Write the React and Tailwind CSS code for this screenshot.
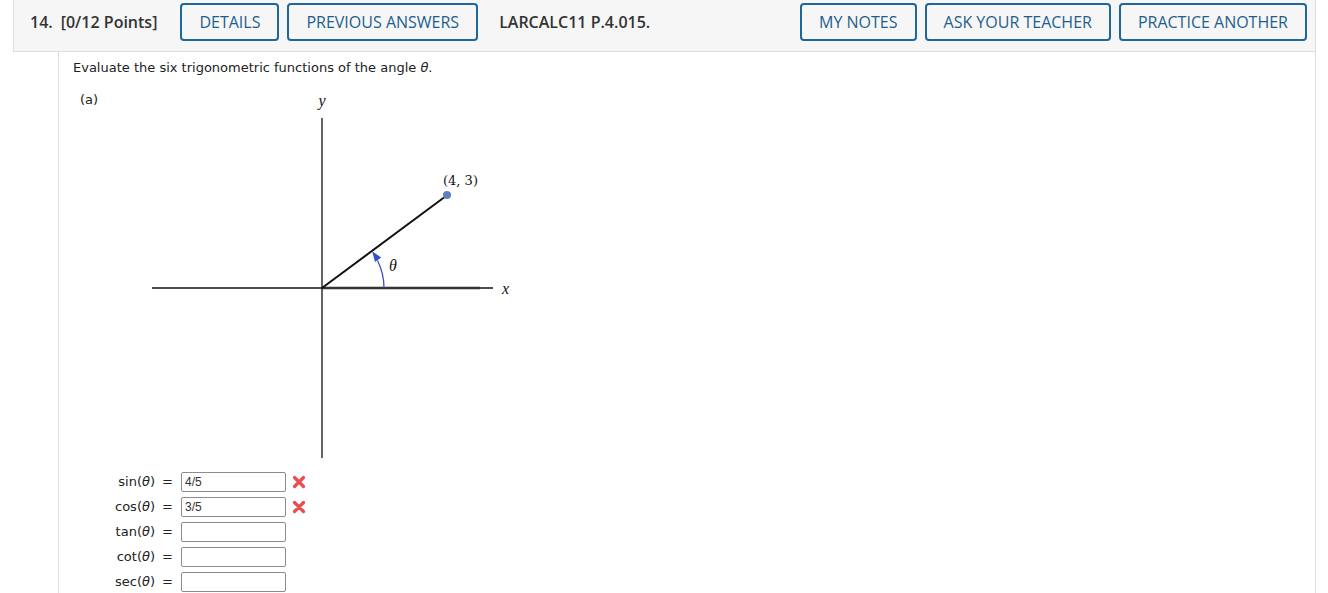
import React from 'react';

const rows = [
  { fn: 'sin', value: '4/5', wrong: true },
  { fn: 'cos', value: '3/5', wrong: true },
  { fn: 'tan', value: '' },
  { fn: 'cot', value: '' },
  { fn: 'sec', value: '' },
];

function HeaderButton({ children }) {
  return (
    <button className="h-[38px] px-[17px] border-2 border-[#1f669c] rounded-[4px] text-[16px] font-medium text-[#1d5e8f] bg-transparent leading-none whitespace-nowrap">
      {children}
    </button>
  );
}

function WrongMark() {
  return (
    <svg width="14" height="14" viewBox="0 0 14 14" className="ml-[6px]">
      <path d="M2.5 2.5 L11.5 11.5 M11.5 2.5 L2.5 11.5" stroke="#ec4b4f" strokeWidth="3.2" strokeLinecap="round" />
    </svg>
  );
}

function Figure() {
  return (
    <svg width="380" height="372" viewBox="0 0 380 372" className="block">
      <text x="182" y="16" textAnchor="middle" fontFamily="'Liberation Serif', serif" fontStyle="italic" fontSize="16" fill="#111">y</text>
      <line x1="182" y1="28" x2="182" y2="368" stroke="#111" strokeWidth="1.3" />
      <line x1="12" y1="198" x2="353" y2="198" stroke="#111" strokeWidth="1.3" />
      <line x1="182" y1="198" x2="340" y2="198" stroke="#333" strokeWidth="2.6" />
      <line x1="182" y1="198" x2="306" y2="106" stroke="#111" strokeWidth="2" />
      <circle cx="307" cy="105" r="4" fill="#5a80bd" />
      <text x="303" y="95" fontFamily="'DejaVu Serif', serif" fontSize="13" fill="#111">(4, 3)</text>
      <text x="362" y="204" fontFamily="'Liberation Serif', serif" fontStyle="italic" fontSize="16" fill="#111">x</text>
      <text x="249" y="181" fontFamily="'Liberation Serif', serif" fontStyle="italic" fontSize="16" fill="#111">θ</text>
      <path d="M244 198 A62 62 0 0 0 237.5 170.5" fill="none" stroke="#3b4fc4" strokeWidth="1.3" />
      <polygon points="232.2,161.2 241.2,167.6 235,172" fill="#3b4fc4" />
    </svg>
  );
}

export default function App() {
  return (
    <div className="min-h-[593px] bg-white text-[#333]" style={{ fontFamily: "'Open Sans', sans-serif" }}>
      <header className="ml-[13px] w-[1303px] h-[52px] bg-[#f6f6f6] border-l border-r border-b border-[#dedede] flex items-start pt-[3px] pl-[16px] pr-[8px]">
        <div className="h-[38px] flex items-center font-semibold text-[16px] text-[#333] whitespace-nowrap">
          <span>14.</span>
          <span className="ml-[8px]">[0/12 Points]</span>
        </div>
        <div className="ml-[23px] flex gap-[8px]">
          <HeaderButton>DETAILS</HeaderButton>
          <HeaderButton>PREVIOUS ANSWERS</HeaderButton>
        </div>
        <div className="ml-[21px] h-[38px] flex items-center font-semibold text-[16px] text-[#333] whitespace-nowrap">
          LARCALC11 P.4.015.
        </div>
        <div className="ml-auto flex gap-[8px]">
          <HeaderButton>MY NOTES</HeaderButton>
          <HeaderButton>ASK YOUR TEACHER</HeaderButton>
          <HeaderButton>PRACTICE ANOTHER</HeaderButton>
        </div>
      </header>

      <main
        className="ml-[58px] w-[1258px] border-l border-r border-[#dedede] pl-[14px] pt-[8px] min-h-[541px] text-[13px] text-[#222]"
        style={{ fontFamily: "'DejaVu Sans', Verdana, sans-serif" }}
      >
        <p className="leading-[16px]">
          Evaluate the six trigonometric functions of the angle <i>θ</i>.
        </p>
        <div className="flex mt-[14px]">
          <span className="ml-[7px] w-[60px] pt-[2px] leading-[16px]">(a)</span>
          <Figure />
        </div>
        <div className="mt-[7px] flex flex-col">
          {rows.map((r) => (
            <div key={r.fn} className="h-[25px] flex items-center">
              <span className="w-[82px] text-right whitespace-nowrap">
                {r.fn}(<i>θ</i>)
              </span>
              <span className="w-[25px] text-center">=</span>
              <div
                className="ml-[1px] w-[105px] h-[20px] border border-[#8c8c8c] rounded-[2px] bg-white pl-[3px] flex items-center text-[12px] text-[#333]"
                style={{ fontFamily: "'Liberation Sans', Arial, sans-serif" }}
              >
                {r.value}
              </div>
              {r.wrong && <WrongMark />}
            </div>
          ))}
        </div>
      </main>
    </div>
  );
}
